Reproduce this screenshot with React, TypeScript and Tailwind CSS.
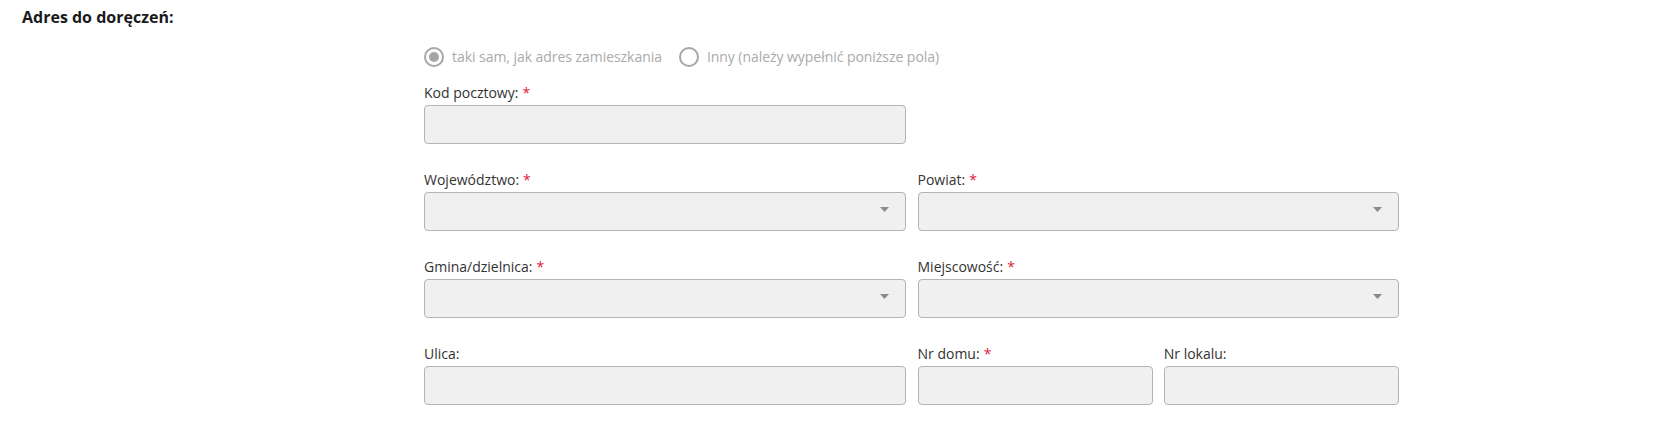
import React from "react";

const font = { fontFamily: '"Open Sans", "Liberation Sans", sans-serif' };

function Label({ text, required }: { text: string; required?: boolean }) {
  return (
    <div className="mb-[2px] h-[20px] text-[14px] leading-[20px] text-[#333333]">
      {text}
      {required && <span className="ml-[4px] text-[#e2183d]">*</span>}
    </div>
  );
}

function TextBox() {
  return <div className="h-[39px] rounded-[4px] border border-[#b4b4b4] bg-[#f0f0f0]" />;
}

function SelectBox() {
  return (
    <div className="flex h-[39px] items-center justify-end rounded-[4px] border border-[#b4b4b4] bg-[#f0f0f0] pr-[16px]">
      <svg width="9" height="5" viewBox="0 0 9 5" className="mb-[4px]">
        <path d="M0 0h9L4.5 5z" fill="#8a8a8a" />
      </svg>
    </div>
  );
}

function Field({
  label,
  required,
  select,
}: {
  label: string;
  required?: boolean;
  select?: boolean;
}) {
  return (
    <div className="flex flex-col">
      <Label text={label} required={required} />
      {select ? <SelectBox /> : <TextBox />}
    </div>
  );
}

function Radio({ checked, label }: { checked?: boolean; label: string }) {
  return (
    <div className="flex items-center">
      <span className="flex h-[20px] w-[20px] items-center justify-center rounded-full border-2 border-[#a6a6a6]">
        {checked && <span className="h-[10px] w-[10px] rounded-full bg-[#a6a6a6]" />}
      </span>
      <span className="ml-[8px] text-[14px] leading-[20px] tracking-[-0.05px] text-[#aaaaaa]">
        {label}
      </span>
    </div>
  );
}

export default function App() {
  return (
    <div className="min-h-[447px] bg-white pt-[6px]" style={font}>
      <h2 className="pl-[22px] text-[16px] font-bold leading-[22px] text-[#1a1a1a]">
        Adres do doręczeń:
      </h2>
      <div className="ml-[424px] mt-[19px] w-[975px]">
        <div className="flex gap-[17px]">
          <Radio checked label="taki sam, jak adres zamieszkania" />
          <Radio label="Inny (należy wypełnić poniższe pola)" />
        </div>
        <div className="mt-[16px] flex flex-col gap-[26px]">
          <div className="grid grid-cols-2 gap-x-[12px]">
            <Field label="Kod pocztowy:" required />
          </div>
          <div className="grid grid-cols-2 gap-x-[12px]">
            <Field label="Województwo:" required select />
            <Field label="Powiat:" required select />
          </div>
          <div className="grid grid-cols-2 gap-x-[12px]">
            <Field label="Gmina/dzielnica:" required select />
            <Field label="Miejscowość:" required select />
          </div>
          <div className="grid grid-cols-2 gap-x-[12px]">
            <Field label="Ulica:" />
            <div className="grid grid-cols-2 gap-x-[11px]">
              <Field label="Nr domu:" required />
              <Field label="Nr lokalu:" />
            </div>
          </div>
        </div>
      </div>
    </div>
  );
}
